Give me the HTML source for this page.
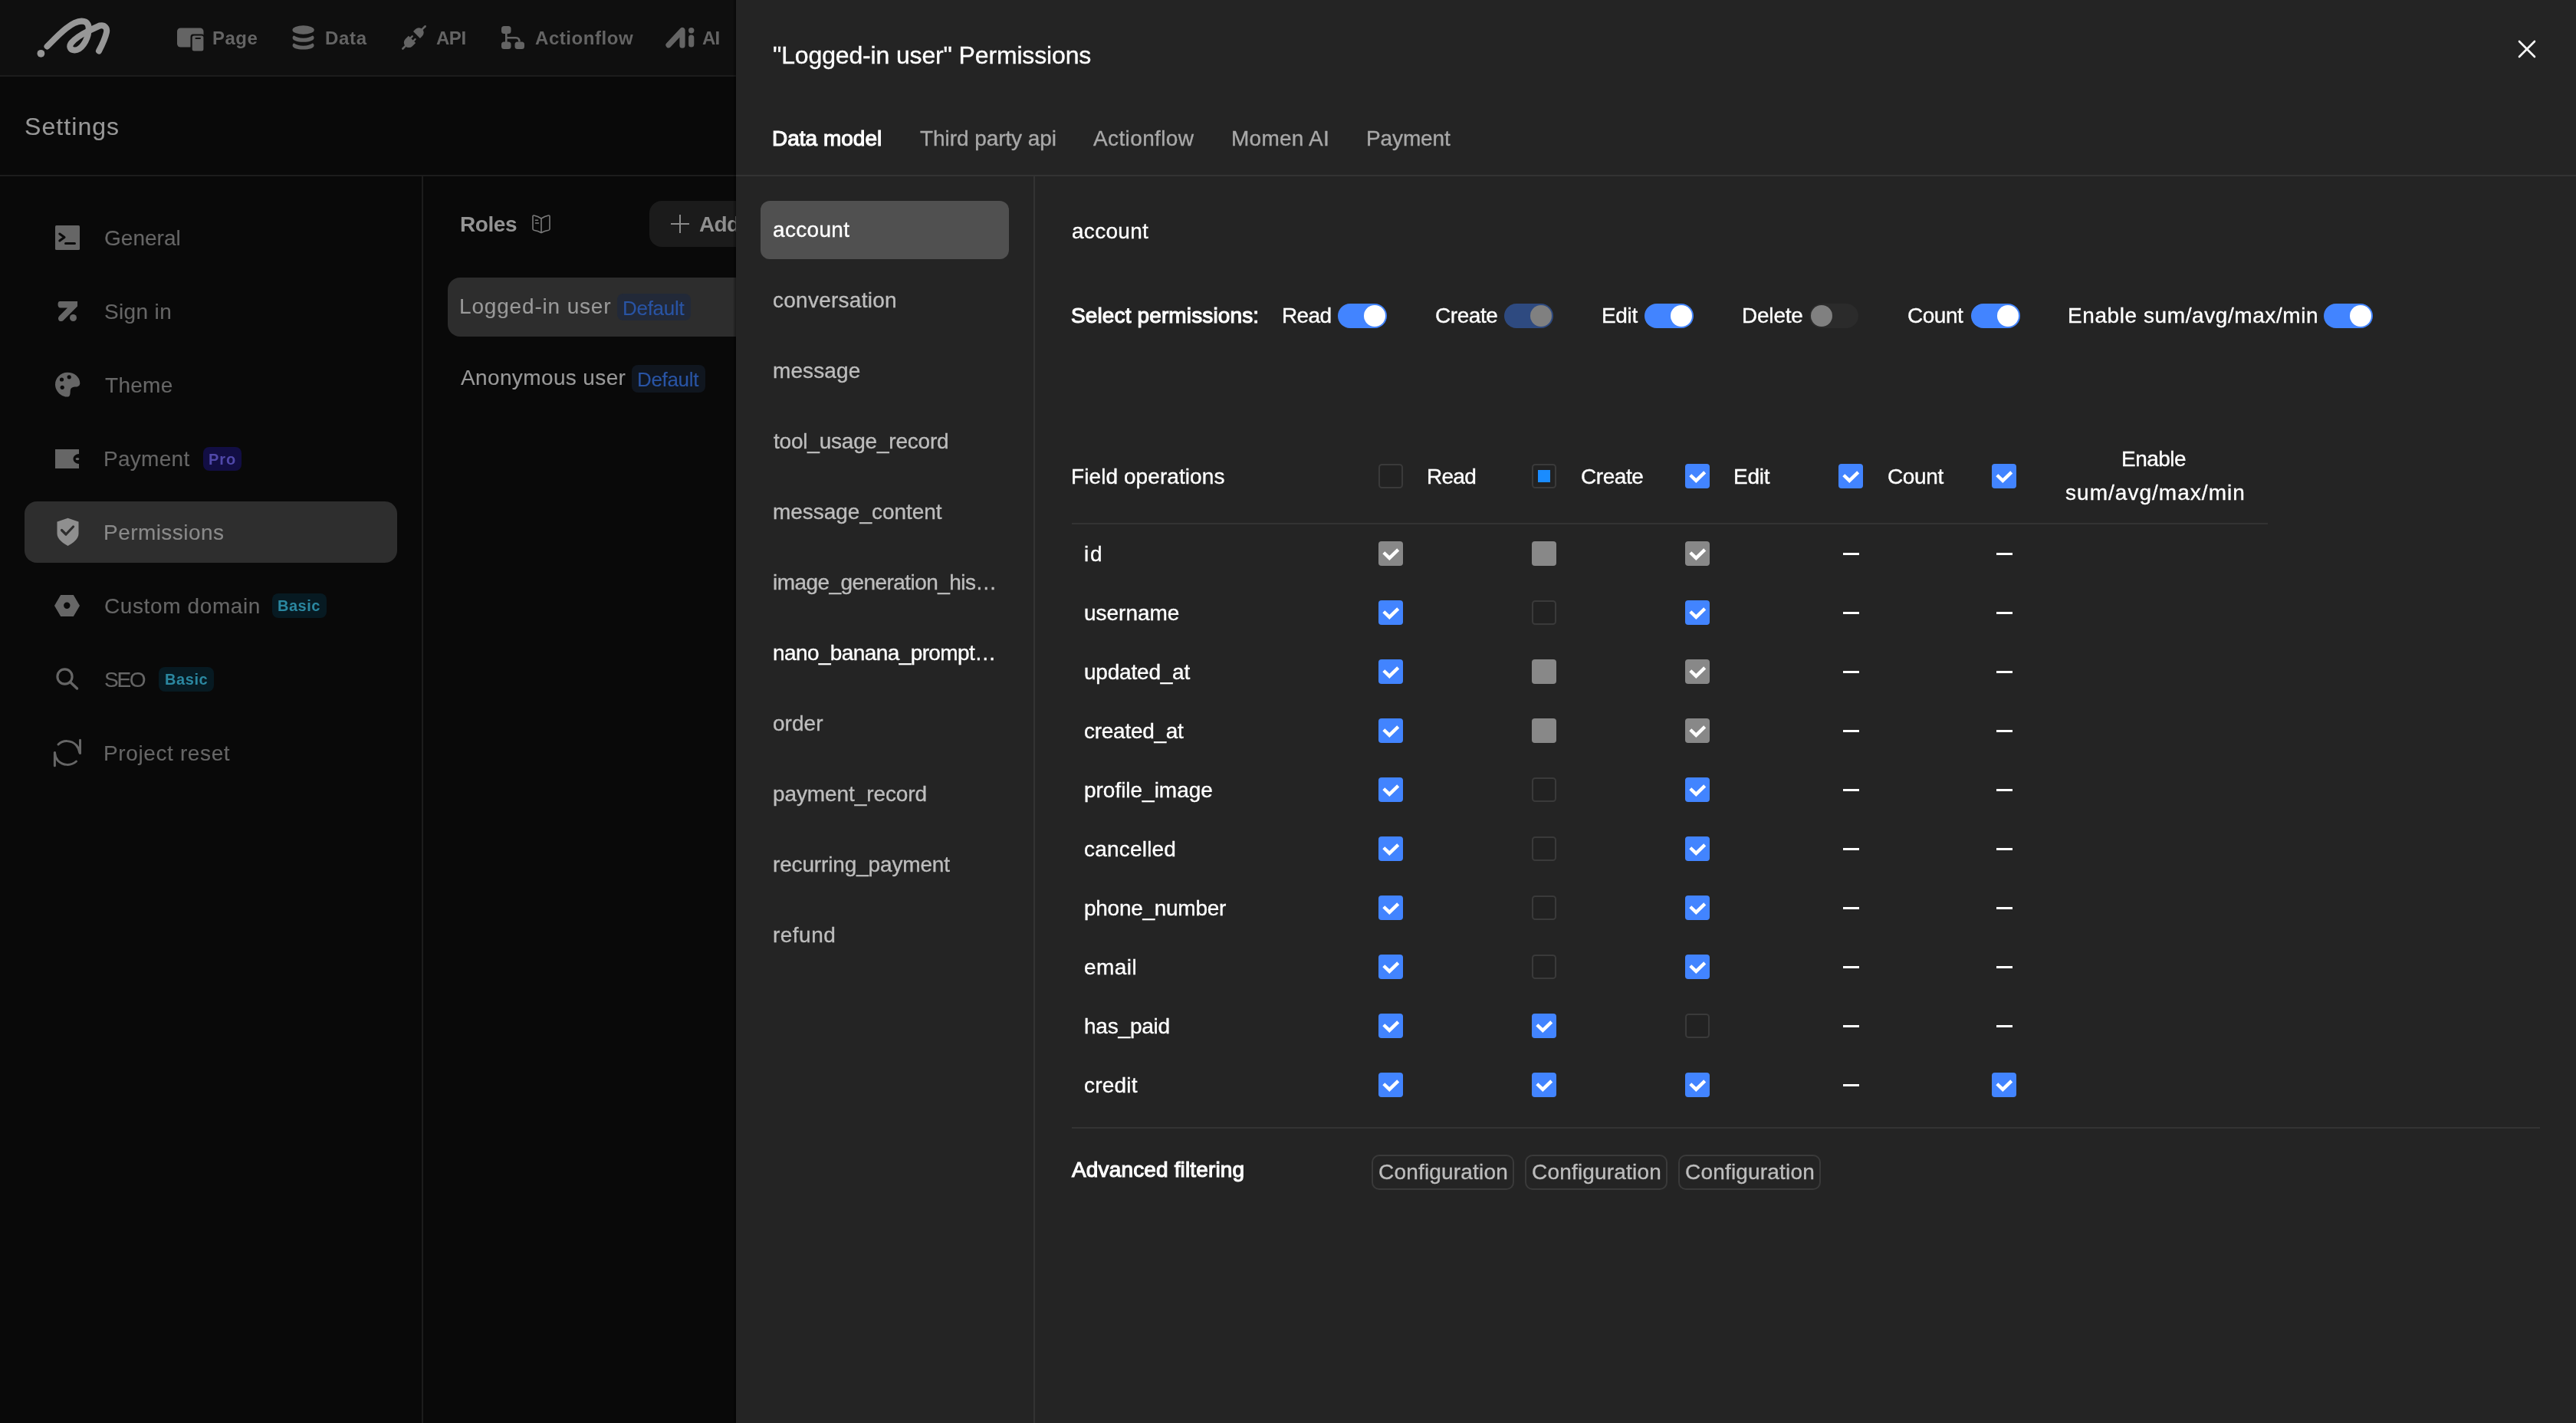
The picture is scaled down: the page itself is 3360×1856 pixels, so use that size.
<!DOCTYPE html>
<html><head><meta charset="utf-8"><style>
html,body{margin:0;padding:0;}
body{width:3360px;height:1856px;position:relative;overflow:hidden;background:#242424;font-family:'Liberation Sans',sans-serif;}
.t{position:absolute;line-height:0;white-space:nowrap;will-change:transform;}
.r{position:absolute;}
svg.r{overflow:visible}
</style></head><body>
<div class="r" style="left:0px;top:0px;width:960px;height:99px;background:#0f0f0f;"></div>
<div class="r" style="left:0px;top:98px;width:960px;height:2px;background:#1c1c1c;"></div>
<div class="r" style="left:0px;top:100px;width:960px;height:128px;background:#090909;"></div>
<div class="r" style="left:0px;top:228px;width:960px;height:2px;background:#1c1c1c;"></div>
<div class="r" style="left:0px;top:230px;width:960px;height:1626px;background:#090909;"></div>
<div class="r" style="left:550px;top:230px;width:2px;height:1626px;background:#1c1c1c;"></div>
<svg class="r" style="left:40px;top:15px" width="110" height="70" viewBox="0 0 110 70"><g fill="none" stroke="#979797" stroke-width="8" stroke-linecap="round" stroke-linejoin="round"><path d="M21.5 45.5 C35 32, 52 13, 66.5 12.5 C75 12.5, 76.5 19, 75.5 26 C74 38, 66 50.5, 57.5 50.5 C51 50.5, 49.5 45, 53.5 40.5 C57.5 36, 66 30, 76 25 L90 18.5 C97 17, 100 22, 99 27 C97 36, 93 44, 89 51.5"/></g><circle cx="13.4" cy="54.8" r="4.9" fill="#979797"/></svg>
<svg class="r" style="left:230px;top:36px" width="36" height="31" viewBox="0 0 36 31"><rect x="1" y="0.5" width="34.5" height="25" rx="4.5" fill="#646464"/><rect x="18.5" y="8.5" width="18" height="23" rx="3.5" fill="#0f0f0f"/><rect x="20.7" y="10.4" width="14.7" height="20.2" rx="2.5" fill="#646464"/><rect x="24.5" y="13" width="7.5" height="2" rx="1" fill="#0f0f0f"/></svg>
<div class="t" style="left:276.5px;top:49.7px;font-size:24px;color:#646464;font-weight:bold;letter-spacing:0.49px;">Page</div>
<svg class="r" style="left:381px;top:32px" width="30" height="34" viewBox="0 0 30 34"><ellipse cx="14.6" cy="7" rx="14.2" ry="5.7" fill="#646464"/><path d="M0.6 17.5 C0.6 20.6, 6.5 22.8, 14.6 22.8 C22.7 22.8, 28.6 20.6, 28.6 17.5 C28.6 15.8, 27.6 14.6, 26.5 14.6 C24 16.5, 20 17.7, 14.6 17.7 C9.2 17.7, 5.2 16.5, 2.7 14.6 C1.6 14.6, 0.6 15.8, 0.6 17.5Z" fill="#646464"/><path d="M0.6 27.4 C0.6 30.5, 6.5 32.6, 14.6 32.6 C22.7 32.6, 28.6 30.5, 28.6 27.4 C28.6 25.7, 27.6 24.6, 26.5 24.6 C24 26.5, 20 27.7, 14.6 27.7 C9.2 27.7, 5.2 26.5, 2.7 24.6 C1.6 24.6, 0.6 25.7, 0.6 27.4Z" fill="#646464"/></svg>
<div class="t" style="left:424.0px;top:49.7px;font-size:24px;color:#646464;font-weight:bold;letter-spacing:0.71px;">Data</div>
<svg class="r" style="left:515px;top:25px" width="50" height="50" viewBox="0 0 50 50"><g transform="translate(9.8 39.1) rotate(-45)" fill="#646464" stroke="#646464" stroke-linecap="round"><line x1="0.8" y1="0" x2="7" y2="0" stroke-width="2.6"/><path d="M18 -6.5 H12 A6.5 6.5 0 0 0 12 6.5 H18 Z" stroke-width="0"/><line x1="17" y1="-2.7" x2="21" y2="-2.7" stroke-width="2.4"/><line x1="17" y1="2.7" x2="21" y2="2.7" stroke-width="2.4"/><path d="M26.4 -6.3 H30.5 A6.3 6.3 0 0 1 30.5 6.3 H26.4 Z" stroke-width="0"/><line x1="35" y1="0" x2="42.2" y2="0" stroke-width="2.6"/></g></svg>
<div class="t" style="left:568.8px;top:49.7px;font-size:24px;color:#646464;font-weight:bold;letter-spacing:-0.47px;">API</div>
<svg class="r" style="left:653px;top:33px" width="32" height="32" viewBox="0 0 32 32"><g fill="#646464"><rect x="1" y="1" width="12.5" height="10" rx="3.5"/><rect x="1" y="21.4" width="12.5" height="9.6" rx="3.5"/><rect x="18.5" y="21.4" width="12.5" height="9.6" rx="3.5"/></g><path d="M7.3 10 V23 M7.3 16.2 H20 C22.5 16.2, 24.5 18, 24.5 21.5" fill="none" stroke="#646464" stroke-width="2.6"/></svg>
<div class="t" style="left:698.0px;top:49.7px;font-size:24px;color:#646464;font-weight:bold;letter-spacing:0.56px;">Actionflow</div>
<svg class="r" style="left:866px;top:35px" width="42" height="30" viewBox="0 0 42 30"><g stroke="#646464" stroke-linecap="round" stroke-linejoin="round" fill="none" stroke-width="7.2"><path d="M6 23.8 L24 4.5 V24.2"/><line x1="35.7" y1="14" x2="35.7" y2="23"/></g><circle cx="35.7" cy="4.8" r="3.7" fill="#646464"/></svg>
<div class="t" style="left:915.5px;top:49.7px;font-size:24px;color:#646464;font-weight:bold;letter-spacing:-0.83px;">AI</div>
<div class="t" style="left:32.4px;top:164.9px;font-size:32px;color:#989898;-webkit-text-stroke:0.12px #989898;letter-spacing:1.07px;">Settings</div>
<div class="r" style="left:32px;top:654px;width:486px;height:80px;background:#2e2e2e;border-radius:16px;"></div>
<div class="t" style="left:136.0px;top:310.8px;font-size:28px;color:#666666;-webkit-text-stroke:0.12px #666666;letter-spacing:0.03px;">General</div>
<div class="t" style="left:136.0px;top:406.8px;font-size:28px;color:#666666;-webkit-text-stroke:0.12px #666666;letter-spacing:0.36px;">Sign in</div>
<div class="t" style="left:137.0px;top:502.8px;font-size:28px;color:#666666;-webkit-text-stroke:0.12px #666666;letter-spacing:0.28px;">Theme</div>
<div class="t" style="left:135.0px;top:598.8px;font-size:28px;color:#666666;-webkit-text-stroke:0.12px #666666;letter-spacing:0.28px;">Payment</div>
<div class="t" style="left:135.0px;top:694.8px;font-size:28px;color:#8a8a8a;-webkit-text-stroke:0.12px #8a8a8a;letter-spacing:0.45px;">Permissions</div>
<div class="t" style="left:136.0px;top:790.8px;font-size:28px;color:#666666;-webkit-text-stroke:0.12px #666666;letter-spacing:0.61px;">Custom domain</div>
<div class="t" style="left:136.0px;top:886.8px;font-size:28px;color:#666666;-webkit-text-stroke:0.12px #666666;letter-spacing:-2.28px;">SEO</div>
<div class="t" style="left:135.0px;top:982.8px;font-size:28px;color:#666666;-webkit-text-stroke:0.12px #666666;letter-spacing:0.62px;">Project reset</div>
<svg class="r" style="left:72px;top:294px" width="32" height="32" viewBox="0 0 32 32"><rect x="0" y="0" width="32" height="32" rx="1.5" fill="#666666"/><path d="M5.8 11 L12 15.5 L5.8 20" fill="none" stroke="#0a0a0a" stroke-width="3" stroke-linecap="round" stroke-linejoin="round"/><line x1="13.5" y1="23.5" x2="25.5" y2="23.5" stroke="#0a0a0a" stroke-width="3" stroke-linecap="round"/></svg>
<svg class="r" style="left:74px;top:392px" width="30" height="28" viewBox="0 0 30 28"><path d="M4 1 H27 V7.5 L8.5 26 C7 27.5, 3.5 27.5, 2.5 25.5 C1.5 23.5, 2 21.5, 3.5 20 L14 9.5 H5 C2.5 9.5, 1.5 7.5, 1.5 5 C1.5 2.5, 2.5 1, 4 1Z" fill="#666666"/><circle cx="21.5" cy="22.5" r="4.5" fill="#666666"/></svg>
<svg class="r" style="left:72px;top:485px" width="33" height="34" viewBox="0 0 33 34"><path d="M16 0.8 C25 0.8, 32.3 7, 32.3 14.8 C32.3 18, 30 19.5, 27 19.5 C23 19.6, 20.5 20.5, 19.8 24 C19.5 27, 20 31.5, 17 32.5 C8 33.5, 0 25, 0 16.5 C0 8, 7 0.8, 16 0.8Z" fill="#666666"/><circle cx="8.5" cy="10" r="2.6" fill="#0a0a0a"/><circle cx="18.2" cy="6.8" r="2.6" fill="#0a0a0a"/><circle cx="9.2" cy="20.3" r="2.6" fill="#0a0a0a"/></svg>
<svg class="r" style="left:72px;top:586px" width="32" height="26" viewBox="0 0 32 26"><path d="M0 0 H31 V6 C27 6, 23.5 9, 23.5 12.5 C23.5 16, 27 19, 31 19 V25 H0Z" fill="#666666"/><ellipse cx="29" cy="12.6" rx="2.4" ry="1.6" fill="#666666"/></svg>
<svg class="r" style="left:73px;top:675px" width="32" height="38" viewBox="0 0 32 38"><path d="M15.5 0.8 L29.5 5.5 V21 C29.5 28, 22 33.5, 15.5 37 C9 33.5, 1.5 28, 1.5 21 V5.5Z" fill="#8f8f8f"/><path d="M7.5 16.5 L13 22 L22.5 12" fill="none" stroke="#2e2e2e" stroke-width="3.2" stroke-linecap="round" stroke-linejoin="round"/></svg>
<svg class="r" style="left:71px;top:775px" width="34" height="30" viewBox="0 0 34 30"><path d="M8.2 1 H24.8 L33 15 L24.8 29 H8.2 L0 15Z" fill="#666666"/><circle cx="16.3" cy="14.8" r="4.2" fill="#0a0a0a"/></svg>
<svg class="r" style="left:70px;top:864px" width="34" height="38" viewBox="0 0 34 38"><circle cx="14.5" cy="18.5" r="9.6" fill="none" stroke="#666666" stroke-width="3.1"/><line x1="21.5" y1="25.5" x2="30.5" y2="34" stroke="#666666" stroke-width="3.4" stroke-linecap="round"/></svg>
<svg class="r" style="left:68px;top:962px" width="40" height="40" viewBox="0 0 40 40"><g fill="none" stroke="#666666" stroke-width="3" stroke-linecap="round"><path d="M8 9 C14 3, 25 3, 31.5 10 C34 13, 35.5 16, 35.8 19.5"/><line x1="36.5" y1="3.3" x2="36.5" y2="20.5"/><path d="M31.5 31 C25 37, 14 37, 7.5 30 C5 27, 3.6 24, 3.5 20"/><line x1="3.4" y1="19.5" x2="3.4" y2="36.8"/></g></svg>
<div class="r" style="left:264.5px;top:583px;width:50.5px;height:31px;background:#120e44;border-radius:8px;"></div>
<div class="t" style="left:271.5px;top:598.6px;font-size:20px;color:#5048aa;font-weight:bold;letter-spacing:0.99px;">Pro</div>
<div class="r" style="left:355px;top:774px;width:71px;height:31.5px;background:#071a22;border-radius:8px;"></div>
<div class="t" style="left:362.2px;top:789.6px;font-size:20px;color:#2b87a0;font-weight:bold;letter-spacing:0.51px;">Basic</div>
<div class="r" style="left:207px;top:870px;width:72px;height:31.5px;background:#071a22;border-radius:8px;"></div>
<div class="t" style="left:214.6px;top:885.6px;font-size:20px;color:#2b87a0;font-weight:bold;letter-spacing:0.59px;">Basic</div>
<div class="t" style="left:599.7px;top:293.3px;font-size:28px;color:#939393;font-weight:bold;letter-spacing:-0.42px;">Roles</div>
<svg class="r" style="left:693px;top:279px" width="26" height="26" viewBox="0 0 26 26"><g fill="none" stroke="#7a7a7a" stroke-width="1.6" stroke-linejoin="round" stroke-linecap="round"><path d="M13 6 C10 4, 6 2.5, 3.5 2 C2.5 1.8, 2 2.5, 2 3.5 V19.5 C2 20.5, 2.5 21, 3.5 21.3 C7 22, 10 23, 13 24.5 C16 23, 19 22, 22.5 21.3 C23.5 21, 24 20.5, 24 19.5 V3.5 C24 2.5, 23.5 1.8, 22.5 2 C20 2.5, 16 4, 13 6Z"/><line x1="13" y1="6" x2="13" y2="24.5"/><line x1="5.5" y1="8.2" x2="8.5" y2="8.2"/><line x1="5.5" y1="12" x2="9.5" y2="12"/></g></svg>
<div class="r" style="left:847px;top:262px;width:200px;height:60px;background:#1b1b1b;border-radius:16px;"></div>
<svg class="r" style="left:874px;top:279px" width="26" height="26" viewBox="0 0 26 26"><g stroke="#8a8a8a" stroke-width="2"><line x1="13" y1="1" x2="13" y2="25"/><line x1="1" y1="13" x2="25" y2="13"/></g></svg>
<div class="t" style="left:912.0px;top:293.3px;font-size:28px;color:#8f8f8f;font-weight:bold;letter-spacing:-0.60px;">Add</div>
<div class="r" style="left:584px;top:362px;width:420px;height:77px;background:#2d2d2d;border-radius:16px;"></div>
<div class="t" style="left:598.7px;top:399.8px;font-size:28px;color:#999999;-webkit-text-stroke:0.12px #999999;letter-spacing:0.83px;">Logged-in user</div>
<div class="r" style="left:805px;top:383px;width:96px;height:35px;background:#222938;border-radius:8px;"></div>
<div class="t" style="left:812.0px;top:401.5px;font-size:26px;color:#2954a4;-webkit-text-stroke:0.12px #2954a4;letter-spacing:-0.28px;">Default</div>
<div class="t" style="left:600.7px;top:492.8px;font-size:28px;color:#999999;-webkit-text-stroke:0.12px #999999;letter-spacing:0.37px;">Anonymous user</div>
<div class="r" style="left:824px;top:476px;width:96px;height:36px;background:#10161f;border-radius:8px;"></div>
<div class="t" style="left:831.2px;top:494.5px;font-size:26px;color:#2954a4;-webkit-text-stroke:0.12px #2954a4;letter-spacing:-0.33px;">Default</div>
<div class="r" style="left:956px;top:0px;width:4px;height:1856px;background:linear-gradient(to right, rgba(0,0,0,0), rgba(0,0,0,0.4));"></div>
<div class="r" style="left:960px;top:0px;width:2400px;height:1856px;background:#242424;"></div>
<div class="t" style="left:1008.4px;top:71.9px;font-size:32px;color:#ffffff;-webkit-text-stroke:0.35px #ffffff;letter-spacing:-0.15px;">"Logged-in user" Permissions</div>
<svg class="r" style="left:3284px;top:52px" width="24" height="24" viewBox="0 0 24 24"><g stroke="#fff" stroke-width="2.6" stroke-linecap="round"><line x1="2" y1="2" x2="22" y2="22"/><line x1="22" y1="2" x2="2" y2="22"/></g></svg>
<div class="t" style="left:1007.4px;top:180.8px;font-size:28px;color:#ffffff;-webkit-text-stroke:1.1px #ffffff;letter-spacing:0.00px;">Data model</div>
<div class="t" style="left:1199.8px;top:180.8px;font-size:28px;color:#a8a8a8;-webkit-text-stroke:0.35px #a8a8a8;letter-spacing:-0.07px;">Third party api</div>
<div class="t" style="left:1426.2px;top:180.8px;font-size:28px;color:#a8a8a8;-webkit-text-stroke:0.35px #a8a8a8;letter-spacing:0.38px;">Actionflow</div>
<div class="t" style="left:1606.0px;top:180.8px;font-size:28px;color:#a8a8a8;-webkit-text-stroke:0.35px #a8a8a8;letter-spacing:0.24px;">Momen AI</div>
<div class="t" style="left:1782.0px;top:180.8px;font-size:28px;color:#a8a8a8;-webkit-text-stroke:0.35px #a8a8a8;letter-spacing:-0.12px;">Payment</div>
<div class="r" style="left:960px;top:228px;width:2400px;height:2px;background:#333333;"></div>
<div class="r" style="left:1348px;top:230px;width:2px;height:1626px;background:#333333;"></div>
<div class="r" style="left:992px;top:262px;width:324px;height:76px;background:#505050;border-radius:12px;"></div>
<div class="t" style="left:1007.8px;top:299.8px;font-size:28px;color:#ffffff;-webkit-text-stroke:0.35px #ffffff;letter-spacing:0.32px;">account</div>
<div class="t" style="left:1007.8px;top:391.8px;font-size:28px;color:#bdbdbd;-webkit-text-stroke:0.35px #bdbdbd;letter-spacing:0.26px;">conversation</div>
<div class="t" style="left:1007.8px;top:483.8px;font-size:28px;color:#bdbdbd;-webkit-text-stroke:0.35px #bdbdbd;letter-spacing:0.11px;">message</div>
<div class="t" style="left:1008.8px;top:575.8px;font-size:28px;color:#bdbdbd;-webkit-text-stroke:0.35px #bdbdbd;letter-spacing:-0.21px;">tool_usage_record</div>
<div class="t" style="left:1007.8px;top:667.8px;font-size:28px;color:#bdbdbd;-webkit-text-stroke:0.35px #bdbdbd;letter-spacing:-0.03px;">message_content</div>
<div class="t" style="left:1007.8px;top:759.8px;font-size:28px;color:#bdbdbd;-webkit-text-stroke:0.35px #bdbdbd;letter-spacing:-0.56px;">image_generation_his…</div>
<div class="t" style="left:1007.8px;top:851.8px;font-size:28px;color:#ffffff;-webkit-text-stroke:0.35px #ffffff;letter-spacing:-0.60px;">nano_banana_prompt…</div>
<div class="t" style="left:1007.8px;top:943.8px;font-size:28px;color:#bdbdbd;-webkit-text-stroke:0.35px #bdbdbd;letter-spacing:0.04px;">order</div>
<div class="t" style="left:1007.8px;top:1035.8px;font-size:28px;color:#bdbdbd;-webkit-text-stroke:0.35px #bdbdbd;letter-spacing:-0.09px;">payment_record</div>
<div class="t" style="left:1007.8px;top:1127.8px;font-size:28px;color:#bdbdbd;-webkit-text-stroke:0.35px #bdbdbd;letter-spacing:-0.15px;">recurring_payment</div>
<div class="t" style="left:1007.8px;top:1219.8px;font-size:28px;color:#bdbdbd;-webkit-text-stroke:0.35px #bdbdbd;letter-spacing:0.48px;">refund</div>
<div class="t" style="left:1398.0px;top:302.3px;font-size:28px;color:#ffffff;-webkit-text-stroke:0.35px #ffffff;letter-spacing:0.29px;">account</div>
<div class="t" style="left:1397.3px;top:411.8px;font-size:28px;color:#ffffff;-webkit-text-stroke:1.1px #ffffff;letter-spacing:0.13px;">Select permissions:</div>
<div class="t" style="left:1671.8px;top:411.8px;font-size:28px;color:#ffffff;-webkit-text-stroke:0.35px #ffffff;letter-spacing:-0.66px;">Read</div>
<div class="r" style="left:1745px;top:396px;width:64px;height:32px;background:#4284ff;border-radius:16px;"></div>
<div class="r" style="left:1779px;top:398px;width:28px;height:28px;background:#ffffff;border-radius:14px;"></div>
<div class="t" style="left:1872.0px;top:411.8px;font-size:28px;color:#ffffff;-webkit-text-stroke:0.35px #ffffff;letter-spacing:-0.43px;">Create</div>
<div class="r" style="left:1962px;top:396px;width:64px;height:32px;background:#2e4a80;border-radius:16px;"></div>
<div class="r" style="left:1996px;top:398px;width:28px;height:28px;background:#808080;border-radius:14px;"></div>
<div class="t" style="left:2088.8px;top:411.8px;font-size:28px;color:#ffffff;-webkit-text-stroke:0.35px #ffffff;letter-spacing:-0.32px;">Edit</div>
<div class="r" style="left:2145px;top:396px;width:64px;height:32px;background:#4284ff;border-radius:16px;"></div>
<div class="r" style="left:2179px;top:398px;width:28px;height:28px;background:#ffffff;border-radius:14px;"></div>
<div class="t" style="left:2272.0px;top:411.8px;font-size:28px;color:#ffffff;-webkit-text-stroke:0.35px #ffffff;letter-spacing:-0.21px;">Delete</div>
<div class="r" style="left:2360px;top:396px;width:64px;height:32px;background:#2b2b2b;border-radius:16px;"></div>
<div class="r" style="left:2362px;top:398px;width:28px;height:28px;background:#808080;border-radius:14px;"></div>
<div class="t" style="left:2488.3px;top:411.8px;font-size:28px;color:#ffffff;-webkit-text-stroke:0.35px #ffffff;letter-spacing:-0.48px;">Count</div>
<div class="r" style="left:2571px;top:396px;width:64px;height:32px;background:#4284ff;border-radius:16px;"></div>
<div class="r" style="left:2605px;top:398px;width:28px;height:28px;background:#ffffff;border-radius:14px;"></div>
<div class="t" style="left:2697.0px;top:411.8px;font-size:28px;color:#ffffff;-webkit-text-stroke:0.35px #ffffff;letter-spacing:0.58px;">Enable sum/avg/max/min</div>
<div class="r" style="left:3031px;top:396px;width:64px;height:32px;background:#4284ff;border-radius:16px;"></div>
<div class="r" style="left:3065px;top:398px;width:28px;height:28px;background:#ffffff;border-radius:14px;"></div>
<div class="t" style="left:1396.8px;top:621.8px;font-size:28px;color:#ffffff;-webkit-text-stroke:0.35px #ffffff;letter-spacing:0.08px;">Field operations</div>
<svg class="r" style="left:1798px;top:605px" width="32" height="32" viewBox="0 0 32 32"><rect x="1" y="1" width="30" height="30" rx="3.5" fill="#222" stroke="#3a3a3a" stroke-width="2"/></svg>
<div class="t" style="left:1860.7px;top:621.8px;font-size:28px;color:#ffffff;-webkit-text-stroke:0.35px #ffffff;letter-spacing:-0.72px;">Read</div>
<svg class="r" style="left:1998px;top:605px" width="32" height="32" viewBox="0 0 32 32"><rect x="1" y="1" width="30" height="30" rx="3.5" fill="#222" stroke="#3a3a3a" stroke-width="2"/><rect x="8" y="8" width="16" height="16" fill="#1a8cff"/></svg>
<div class="t" style="left:2061.6px;top:621.8px;font-size:28px;color:#ffffff;-webkit-text-stroke:0.35px #ffffff;letter-spacing:-0.43px;">Create</div>
<svg class="r" style="left:2198px;top:605px" width="32" height="32" viewBox="0 0 32 32"><rect x="0" y="0" width="32" height="32" rx="4" fill="#4284ff"/><path d="M6.8 14.7 L14.3 21.9 L25.7 10.9" fill="none" stroke="#fff" stroke-width="4.3"/></svg>
<div class="t" style="left:2260.7px;top:621.8px;font-size:28px;color:#ffffff;-webkit-text-stroke:0.35px #ffffff;letter-spacing:-0.26px;">Edit</div>
<svg class="r" style="left:2398px;top:605px" width="32" height="32" viewBox="0 0 32 32"><rect x="0" y="0" width="32" height="32" rx="4" fill="#4284ff"/><path d="M6.8 14.7 L14.3 21.9 L25.7 10.9" fill="none" stroke="#fff" stroke-width="4.3"/></svg>
<div class="t" style="left:2461.6px;top:621.8px;font-size:28px;color:#ffffff;-webkit-text-stroke:0.35px #ffffff;letter-spacing:-0.38px;">Count</div>
<svg class="r" style="left:2598px;top:605px" width="32" height="32" viewBox="0 0 32 32"><rect x="0" y="0" width="32" height="32" rx="4" fill="#4284ff"/><path d="M6.8 14.7 L14.3 21.9 L25.7 10.9" fill="none" stroke="#fff" stroke-width="4.3"/></svg>
<div class="t" style="left:2767.0px;top:599.3px;font-size:28px;color:#ffffff;-webkit-text-stroke:0.35px #ffffff;letter-spacing:-0.52px;">Enable</div>
<div class="t" style="left:2693.7px;top:642.8px;font-size:28px;color:#ffffff;-webkit-text-stroke:0.35px #ffffff;letter-spacing:1.03px;">sum/avg/max/min</div>
<div class="r" style="left:1398px;top:682px;width:1560px;height:2px;background:#333333;"></div>
<div class="t" style="left:1413.7px;top:722.8px;font-size:28px;color:#ffffff;-webkit-text-stroke:0.35px #ffffff;letter-spacing:1.68px;">id</div>
<svg class="r" style="left:1798px;top:706px" width="32" height="32" viewBox="0 0 32 32"><rect x="0" y="0" width="32" height="32" rx="4" fill="#888888"/><path d="M6.8 14.7 L14.3 21.9 L25.7 10.9" fill="none" stroke="#fff" stroke-width="4.3"/></svg>
<svg class="r" style="left:1998px;top:706px" width="32" height="32" viewBox="0 0 32 32"><rect x="0" y="0" width="32" height="32" rx="4" fill="#888888"/></svg>
<svg class="r" style="left:2198px;top:706px" width="32" height="32" viewBox="0 0 32 32"><rect x="0" y="0" width="32" height="32" rx="4" fill="#888888"/><path d="M6.8 14.7 L14.3 21.9 L25.7 10.9" fill="none" stroke="#fff" stroke-width="4.3"/></svg>
<div class="r" style="left:2404px;top:721px;width:21px;height:2.5px;background:#ffffff;"></div>
<div class="r" style="left:2604px;top:721px;width:21px;height:2.5px;background:#ffffff;"></div>
<div class="t" style="left:1413.7px;top:799.8px;font-size:28px;color:#ffffff;-webkit-text-stroke:0.35px #ffffff;letter-spacing:-0.01px;">username</div>
<svg class="r" style="left:1798px;top:783px" width="32" height="32" viewBox="0 0 32 32"><rect x="0" y="0" width="32" height="32" rx="4" fill="#4284ff"/><path d="M6.8 14.7 L14.3 21.9 L25.7 10.9" fill="none" stroke="#fff" stroke-width="4.3"/></svg>
<svg class="r" style="left:1998px;top:783px" width="32" height="32" viewBox="0 0 32 32"><rect x="1" y="1" width="30" height="30" rx="3.5" fill="#222" stroke="#3a3a3a" stroke-width="2"/></svg>
<svg class="r" style="left:2198px;top:783px" width="32" height="32" viewBox="0 0 32 32"><rect x="0" y="0" width="32" height="32" rx="4" fill="#4284ff"/><path d="M6.8 14.7 L14.3 21.9 L25.7 10.9" fill="none" stroke="#fff" stroke-width="4.3"/></svg>
<div class="r" style="left:2404px;top:798px;width:21px;height:2.5px;background:#ffffff;"></div>
<div class="r" style="left:2604px;top:798px;width:21px;height:2.5px;background:#ffffff;"></div>
<div class="t" style="left:1413.7px;top:876.8px;font-size:28px;color:#ffffff;-webkit-text-stroke:0.35px #ffffff;letter-spacing:-0.21px;">updated_at</div>
<svg class="r" style="left:1798px;top:860px" width="32" height="32" viewBox="0 0 32 32"><rect x="0" y="0" width="32" height="32" rx="4" fill="#4284ff"/><path d="M6.8 14.7 L14.3 21.9 L25.7 10.9" fill="none" stroke="#fff" stroke-width="4.3"/></svg>
<svg class="r" style="left:1998px;top:860px" width="32" height="32" viewBox="0 0 32 32"><rect x="0" y="0" width="32" height="32" rx="4" fill="#888888"/></svg>
<svg class="r" style="left:2198px;top:860px" width="32" height="32" viewBox="0 0 32 32"><rect x="0" y="0" width="32" height="32" rx="4" fill="#888888"/><path d="M6.8 14.7 L14.3 21.9 L25.7 10.9" fill="none" stroke="#fff" stroke-width="4.3"/></svg>
<div class="r" style="left:2404px;top:875px;width:21px;height:2.5px;background:#ffffff;"></div>
<div class="r" style="left:2604px;top:875px;width:21px;height:2.5px;background:#ffffff;"></div>
<div class="t" style="left:1413.7px;top:953.8px;font-size:28px;color:#ffffff;-webkit-text-stroke:0.35px #ffffff;letter-spacing:-0.27px;">created_at</div>
<svg class="r" style="left:1798px;top:937px" width="32" height="32" viewBox="0 0 32 32"><rect x="0" y="0" width="32" height="32" rx="4" fill="#4284ff"/><path d="M6.8 14.7 L14.3 21.9 L25.7 10.9" fill="none" stroke="#fff" stroke-width="4.3"/></svg>
<svg class="r" style="left:1998px;top:937px" width="32" height="32" viewBox="0 0 32 32"><rect x="0" y="0" width="32" height="32" rx="4" fill="#888888"/></svg>
<svg class="r" style="left:2198px;top:937px" width="32" height="32" viewBox="0 0 32 32"><rect x="0" y="0" width="32" height="32" rx="4" fill="#888888"/><path d="M6.8 14.7 L14.3 21.9 L25.7 10.9" fill="none" stroke="#fff" stroke-width="4.3"/></svg>
<div class="r" style="left:2404px;top:952px;width:21px;height:2.5px;background:#ffffff;"></div>
<div class="r" style="left:2604px;top:952px;width:21px;height:2.5px;background:#ffffff;"></div>
<div class="t" style="left:1413.7px;top:1030.8px;font-size:28px;color:#ffffff;-webkit-text-stroke:0.35px #ffffff;letter-spacing:-0.02px;">profile_image</div>
<svg class="r" style="left:1798px;top:1014px" width="32" height="32" viewBox="0 0 32 32"><rect x="0" y="0" width="32" height="32" rx="4" fill="#4284ff"/><path d="M6.8 14.7 L14.3 21.9 L25.7 10.9" fill="none" stroke="#fff" stroke-width="4.3"/></svg>
<svg class="r" style="left:1998px;top:1014px" width="32" height="32" viewBox="0 0 32 32"><rect x="1" y="1" width="30" height="30" rx="3.5" fill="#222" stroke="#3a3a3a" stroke-width="2"/></svg>
<svg class="r" style="left:2198px;top:1014px" width="32" height="32" viewBox="0 0 32 32"><rect x="0" y="0" width="32" height="32" rx="4" fill="#4284ff"/><path d="M6.8 14.7 L14.3 21.9 L25.7 10.9" fill="none" stroke="#fff" stroke-width="4.3"/></svg>
<div class="r" style="left:2404px;top:1029px;width:21px;height:2.5px;background:#ffffff;"></div>
<div class="r" style="left:2604px;top:1029px;width:21px;height:2.5px;background:#ffffff;"></div>
<div class="t" style="left:1413.7px;top:1107.8px;font-size:28px;color:#ffffff;-webkit-text-stroke:0.35px #ffffff;letter-spacing:0.20px;">cancelled</div>
<svg class="r" style="left:1798px;top:1091px" width="32" height="32" viewBox="0 0 32 32"><rect x="0" y="0" width="32" height="32" rx="4" fill="#4284ff"/><path d="M6.8 14.7 L14.3 21.9 L25.7 10.9" fill="none" stroke="#fff" stroke-width="4.3"/></svg>
<svg class="r" style="left:1998px;top:1091px" width="32" height="32" viewBox="0 0 32 32"><rect x="1" y="1" width="30" height="30" rx="3.5" fill="#222" stroke="#3a3a3a" stroke-width="2"/></svg>
<svg class="r" style="left:2198px;top:1091px" width="32" height="32" viewBox="0 0 32 32"><rect x="0" y="0" width="32" height="32" rx="4" fill="#4284ff"/><path d="M6.8 14.7 L14.3 21.9 L25.7 10.9" fill="none" stroke="#fff" stroke-width="4.3"/></svg>
<div class="r" style="left:2404px;top:1106px;width:21px;height:2.5px;background:#ffffff;"></div>
<div class="r" style="left:2604px;top:1106px;width:21px;height:2.5px;background:#ffffff;"></div>
<div class="t" style="left:1413.7px;top:1184.8px;font-size:28px;color:#ffffff;-webkit-text-stroke:0.35px #ffffff;letter-spacing:-0.28px;">phone_number</div>
<svg class="r" style="left:1798px;top:1168px" width="32" height="32" viewBox="0 0 32 32"><rect x="0" y="0" width="32" height="32" rx="4" fill="#4284ff"/><path d="M6.8 14.7 L14.3 21.9 L25.7 10.9" fill="none" stroke="#fff" stroke-width="4.3"/></svg>
<svg class="r" style="left:1998px;top:1168px" width="32" height="32" viewBox="0 0 32 32"><rect x="1" y="1" width="30" height="30" rx="3.5" fill="#222" stroke="#3a3a3a" stroke-width="2"/></svg>
<svg class="r" style="left:2198px;top:1168px" width="32" height="32" viewBox="0 0 32 32"><rect x="0" y="0" width="32" height="32" rx="4" fill="#4284ff"/><path d="M6.8 14.7 L14.3 21.9 L25.7 10.9" fill="none" stroke="#fff" stroke-width="4.3"/></svg>
<div class="r" style="left:2404px;top:1183px;width:21px;height:2.5px;background:#ffffff;"></div>
<div class="r" style="left:2604px;top:1183px;width:21px;height:2.5px;background:#ffffff;"></div>
<div class="t" style="left:1413.7px;top:1261.8px;font-size:28px;color:#ffffff;-webkit-text-stroke:0.35px #ffffff;letter-spacing:0.43px;">email</div>
<svg class="r" style="left:1798px;top:1245px" width="32" height="32" viewBox="0 0 32 32"><rect x="0" y="0" width="32" height="32" rx="4" fill="#4284ff"/><path d="M6.8 14.7 L14.3 21.9 L25.7 10.9" fill="none" stroke="#fff" stroke-width="4.3"/></svg>
<svg class="r" style="left:1998px;top:1245px" width="32" height="32" viewBox="0 0 32 32"><rect x="1" y="1" width="30" height="30" rx="3.5" fill="#222" stroke="#3a3a3a" stroke-width="2"/></svg>
<svg class="r" style="left:2198px;top:1245px" width="32" height="32" viewBox="0 0 32 32"><rect x="0" y="0" width="32" height="32" rx="4" fill="#4284ff"/><path d="M6.8 14.7 L14.3 21.9 L25.7 10.9" fill="none" stroke="#fff" stroke-width="4.3"/></svg>
<div class="r" style="left:2404px;top:1260px;width:21px;height:2.5px;background:#ffffff;"></div>
<div class="r" style="left:2604px;top:1260px;width:21px;height:2.5px;background:#ffffff;"></div>
<div class="t" style="left:1413.7px;top:1338.8px;font-size:28px;color:#ffffff;-webkit-text-stroke:0.35px #ffffff;letter-spacing:-0.21px;">has_paid</div>
<svg class="r" style="left:1798px;top:1322px" width="32" height="32" viewBox="0 0 32 32"><rect x="0" y="0" width="32" height="32" rx="4" fill="#4284ff"/><path d="M6.8 14.7 L14.3 21.9 L25.7 10.9" fill="none" stroke="#fff" stroke-width="4.3"/></svg>
<svg class="r" style="left:1998px;top:1322px" width="32" height="32" viewBox="0 0 32 32"><rect x="0" y="0" width="32" height="32" rx="4" fill="#4284ff"/><path d="M6.8 14.7 L14.3 21.9 L25.7 10.9" fill="none" stroke="#fff" stroke-width="4.3"/></svg>
<svg class="r" style="left:2198px;top:1322px" width="32" height="32" viewBox="0 0 32 32"><rect x="1" y="1" width="30" height="30" rx="3.5" fill="#222" stroke="#3a3a3a" stroke-width="2"/></svg>
<div class="r" style="left:2404px;top:1337px;width:21px;height:2.5px;background:#ffffff;"></div>
<div class="r" style="left:2604px;top:1337px;width:21px;height:2.5px;background:#ffffff;"></div>
<div class="t" style="left:1413.7px;top:1415.8px;font-size:28px;color:#ffffff;-webkit-text-stroke:0.35px #ffffff;letter-spacing:0.22px;">credit</div>
<svg class="r" style="left:1798px;top:1399px" width="32" height="32" viewBox="0 0 32 32"><rect x="0" y="0" width="32" height="32" rx="4" fill="#4284ff"/><path d="M6.8 14.7 L14.3 21.9 L25.7 10.9" fill="none" stroke="#fff" stroke-width="4.3"/></svg>
<svg class="r" style="left:1998px;top:1399px" width="32" height="32" viewBox="0 0 32 32"><rect x="0" y="0" width="32" height="32" rx="4" fill="#4284ff"/><path d="M6.8 14.7 L14.3 21.9 L25.7 10.9" fill="none" stroke="#fff" stroke-width="4.3"/></svg>
<svg class="r" style="left:2198px;top:1399px" width="32" height="32" viewBox="0 0 32 32"><rect x="0" y="0" width="32" height="32" rx="4" fill="#4284ff"/><path d="M6.8 14.7 L14.3 21.9 L25.7 10.9" fill="none" stroke="#fff" stroke-width="4.3"/></svg>
<div class="r" style="left:2404px;top:1414px;width:21px;height:2.5px;background:#ffffff;"></div>
<svg class="r" style="left:2598px;top:1399px" width="32" height="32" viewBox="0 0 32 32"><rect x="0" y="0" width="32" height="32" rx="4" fill="#4284ff"/><path d="M6.8 14.7 L14.3 21.9 L25.7 10.9" fill="none" stroke="#fff" stroke-width="4.3"/></svg>
<div class="r" style="left:1398px;top:1470px;width:1915px;height:2px;background:#333333;"></div>
<div class="t" style="left:1398.0px;top:1526.3px;font-size:28px;color:#ffffff;-webkit-text-stroke:1.1px #ffffff;letter-spacing:0.15px;">Advanced filtering</div>
<div class="r" style="left:1788.5px;top:1506px;width:186.5px;height:46px;border:2px solid #3a3a3a;border-radius:10px;box-sizing:border-box"></div>
<div class="t" style="left:1798.0px;top:1529.3px;font-size:28px;color:#bdbdbd;-webkit-text-stroke:0.35px #bdbdbd;letter-spacing:0.19px;">Configuration</div>
<div class="r" style="left:1988.5px;top:1506px;width:186.5px;height:46px;border:2px solid #3a3a3a;border-radius:10px;box-sizing:border-box"></div>
<div class="t" style="left:1998.0px;top:1529.3px;font-size:28px;color:#bdbdbd;-webkit-text-stroke:0.35px #bdbdbd;letter-spacing:0.19px;">Configuration</div>
<div class="r" style="left:2188.5px;top:1506px;width:186.5px;height:46px;border:2px solid #3a3a3a;border-radius:10px;box-sizing:border-box"></div>
<div class="t" style="left:2198.0px;top:1529.3px;font-size:28px;color:#bdbdbd;-webkit-text-stroke:0.35px #bdbdbd;letter-spacing:0.19px;">Configuration</div>
</body></html>
